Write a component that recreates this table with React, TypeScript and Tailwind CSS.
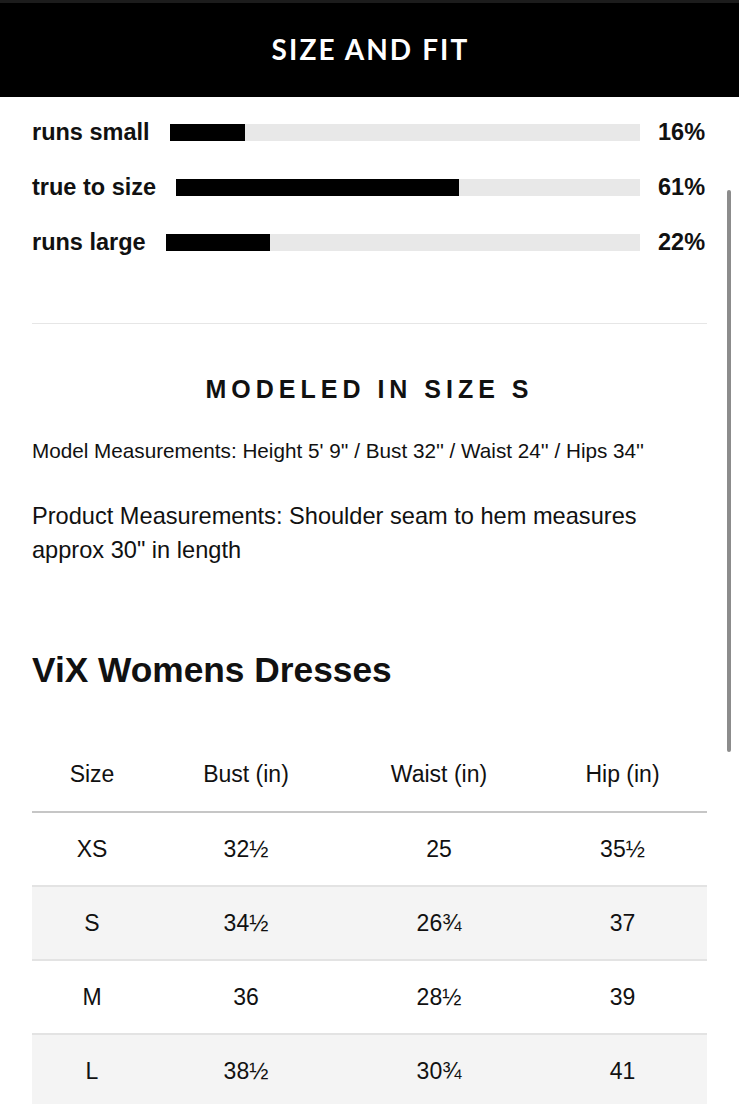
import React from 'react';

const fits = [
    { label: 'runs small', pct: 16 },
    { label: 'true to size', pct: 61 },
    { label: 'runs large', pct: 22 },
];

const sizes = [
    { size: 'XS', bust: '32½', waist: '25', hip: '35½' },
    { size: 'S', bust: '34½', waist: '26¾', hip: '37' },
    { size: 'M', bust: '36', waist: '28½', hip: '39' },
    { size: 'L', bust: '38½', waist: '30¾', hip: '41' },
];

export default function App() {
    return (
        <div className="relative min-h-screen overflow-hidden bg-white text-[#111] font-['Liberation_Sans',Arial,sans-serif]">
            {/* Header */}
            <div className="h-[97px] bg-black border-t-[3px] border-[#1c1c1c] flex items-center justify-center">
                <h1 className="text-white text-[28px] font-bold tracking-[0.075em] font-['Lato','Open_Sans',sans-serif] pb-[2px] pl-[2px]">
                    SIZE AND FIT
                </h1>
            </div>

            <div className="px-8">
                {/* Fit bars */}
                <div className="pt-2 pr-[2px]">
                    {fits.map((f) => (
                        <div key={f.label} className="h-[55px] flex items-center">
                            <span className="text-[23.5px] font-bold whitespace-nowrap mr-5">{f.label}</span>
                            <div className="flex-1 h-[17px] bg-[#e8e8e8]">
                                <div className="h-full bg-black" style={{ width: `${f.pct}%` }}></div>
                            </div>
                            <span className="text-[23.5px] font-bold ml-[18px] w-[47px] text-right">{f.pct}%</span>
                        </div>
                    ))}
                </div>

                <div className="mt-[53px] border-t border-[#e6e6e6]"></div>

                {/* Model info */}
                <h2 className="mt-[50px] text-center text-[25px] leading-[30px] font-bold tracking-[0.2em]">
                    MODELED IN SIZE S
                </h2>
                <p className="mt-[33px] text-[20.7px] leading-[28px]">
                    Model Measurements: Height 5' 9'' / Bust 32'' / Waist 24'' / Hips 34''
                </p>
                <p className="mt-[34px] text-[23.6px] leading-[34px]">
                    Product Measurements: Shoulder seam to hem measures approx 30" in length
                </p>

                {/* Size chart */}
                <h2 className="mt-[82px] text-[35.3px] leading-[42px] font-bold">ViX Womens Dresses</h2>

                <table className="mt-[47px] w-full table-fixed text-[23px] text-center">
                    <colgroup>
                        <col className="w-[120px]" />
                        <col className="w-[188px]" />
                        <col className="w-[198px]" />
                        <col className="w-[169px]" />
                    </colgroup>
                    <thead>
                        <tr className="h-[74px] border-b-2 border-[#c6c6c6]">
                            <th className="font-normal">Size</th>
                            <th className="font-normal">Bust (in)</th>
                            <th className="font-normal">Waist (in)</th>
                            <th className="font-normal">Hip (in)</th>
                        </tr>
                    </thead>
                    <tbody>
                        {sizes.map((r, i) => (
                            <tr
                                key={r.size}
                                className={`h-[74px] border-b-2 border-[#e3e3e3] ${i % 2 === 1 ? 'bg-[#f4f4f4]' : 'bg-white'}`}
                            >
                                <td>{r.size}</td>
                                <td>{r.bust}</td>
                                <td>{r.waist}</td>
                                <td>{r.hip}</td>
                            </tr>
                        ))}
                    </tbody>
                </table>
            </div>

            {/* Scroll indicator */}
            <div className="absolute left-[727px] top-[190px] w-[4px] h-[562px] rounded-full bg-[#8c8c8c]"></div>
        </div>
    );
}
